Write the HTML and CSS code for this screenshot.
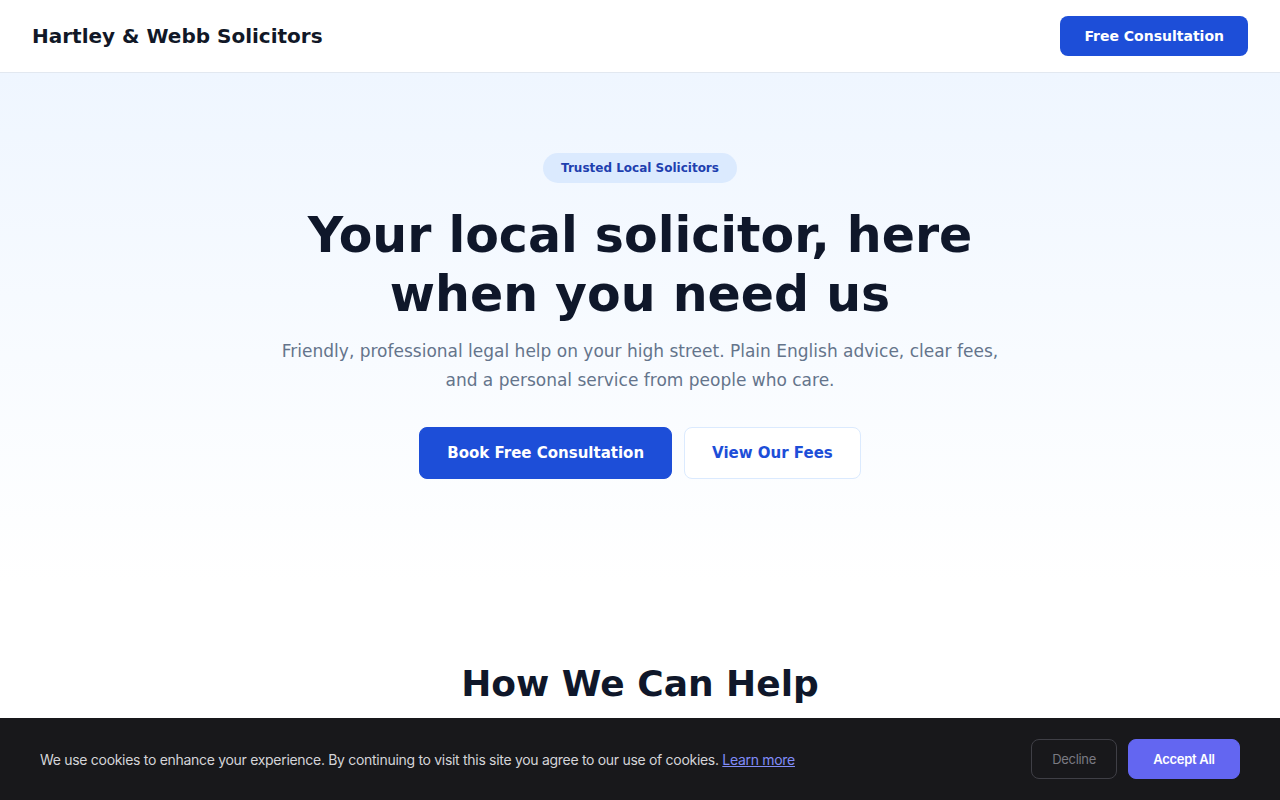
FILE: index.html
```html
<!DOCTYPE html>
<html>
<head>
    <meta charset="utf-8">
    <meta name="viewport" content="width=device-width, initial-scale=1">
    <title>Hartley &amp; Webb Solicitors</title>
    <link rel="stylesheet" href="styles.css">
</head>
<body>
    <header class="siteHeader">
        <div class="logo">Hartley &amp; Webb Solicitors</div>
        <a href="#" class="headerButton">Free Consultation</a>
    </header>

    <section class="hero">
        <span class="badge">Trusted Local Solicitors</span>
        <h1 class="heroTitle">Your local solicitor, here<br>when you need us</h1>
        <p class="heroText">Friendly, professional legal help on your high street. Plain English advice, clear fees, and a personal service from people who care.</p>
        <div class="heroActions">
            <a href="#" class="primaryButton">Book Free Consultation</a>
            <a href="#" class="secondaryButton">View Our Fees</a>
        </div>
    </section>

    <section class="services">
        <h2 class="sectionTitle">How We Can Help</h2>
    </section>

    <div class="cookieBanner">
        <p class="cookieText">We use cookies to enhance your experience. By continuing to visit this site you agree to our use of cookies. <a href="#" class="cookieLink">Learn more</a></p>
        <div class="cookieActions">
            <button class="declineButton">Decline</button>
            <button class="acceptButton">Accept All</button>
        </div>
    </div>
</body>
</html>
```

FILE: styles.css
```css
* {
    box-sizing: border-box;
}

body {
    margin: 0;
    font-family: "DejaVu Sans", sans-serif;
    color: #0f172a;
    background-color: #fff;
}

a {
    text-decoration: none;
}

.siteHeader {
    display: flex;
    justify-content: space-between;
    align-items: center;
    height: 73px;
    padding: 0 32px;
    background-color: #fff;
    border-bottom: 1px solid #e2e8f0;
}

.logo {
    font-size: 20px;
    font-weight: bold;
    color: #111827;
}

.headerButton {
    display: inline-block;
    padding: 10px 24px;
    font-size: 14px;
    line-height: 20px;
    font-weight: bold;
    color: #fff;
    background-color: #1d4ed8;
    border-radius: 8px;
}

.hero {
    display: flex;
    flex-direction: column;
    align-items: center;
    text-align: center;
    padding: 80px 32px 103px;
    background: linear-gradient(180deg, #eff6ff 0%, #ffffff 100%);
}

.badge {
    display: inline-block;
    padding: 6px 18px;
    font-size: 12px;
    line-height: 18px;
    font-weight: bold;
    color: #1e40af;
    background-color: #dbeafe;
    border-radius: 999px;
    margin-bottom: 24px;
}

.heroTitle {
    margin: 0;
    font-size: 49px;
    line-height: 1.2;
    font-weight: bold;
    color: #0f172a;
}

.heroText {
    max-width: 730px;
    margin: 12px 0 0;
    font-size: 17px;
    line-height: 29px;
    color: #64748b;
}

.heroActions {
    display: flex;
    gap: 12px;
    margin-top: 32px;
}

.primaryButton,
.secondaryButton {
    display: inline-block;
    padding: 15px 27px;
    font-size: 15px;
    line-height: 20px;
    font-weight: bold;
    border-radius: 8px;
}

.primaryButton {
    color: #fff;
    background-color: #1d4ed8;
    border: 1px solid #1d4ed8;
}

.secondaryButton {
    color: #1d4ed8;
    background-color: #fff;
    border: 1px solid #dbeafe;
}

.services {
    padding: 80px 32px;
    text-align: center;
}

.sectionTitle {
    margin: 0;
    font-size: 36px;
    line-height: 1.2;
    font-weight: bold;
    color: #0f172a;
}

.cookieBanner {
    position: fixed;
    left: 0;
    right: 0;
    bottom: 0;
    height: 82px;
    display: flex;
    justify-content: space-between;
    align-items: center;
    padding: 0 40px;
    background-color: #18181b;
    font-family: Inter, sans-serif;
    letter-spacing: -0.3px;
}

.cookieText {
    margin: 0;
    font-size: 14px;
    color: #d4d4d8;
}

.cookieLink {
    color: #818cf8;
    text-decoration: underline;
}

.cookieActions {
    display: flex;
    gap: 11px;
}

.declineButton,
.acceptButton {
    height: 40px;
    padding: 0 20px;
    font-family: Inter, sans-serif;
    font-size: 13px;
    letter-spacing: -0.3px;
    border-radius: 8px;
    cursor: pointer;
}

.declineButton {
    color: #7a7a82;
    background-color: transparent;
    border: 1px solid #3f3f46;
}

.acceptButton {
    width: 112px;
    color: #fff;
    font-weight: 600;
    background-color: #6366f1;
    border: 1px solid #6366f1;
    padding: 0;
}
```
